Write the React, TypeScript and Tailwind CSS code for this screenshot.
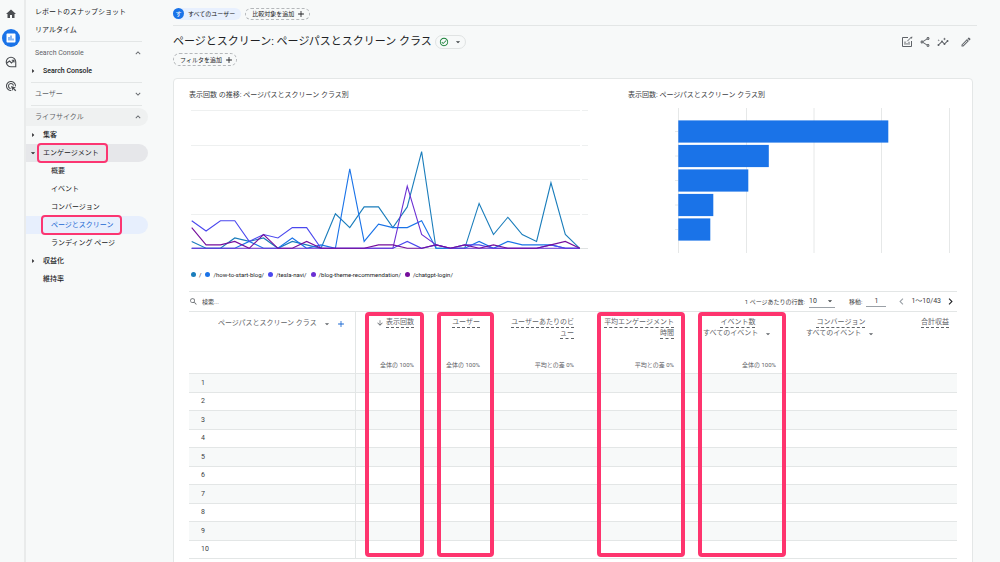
import type { ReactNode } from "react";
import {
  MdAdd,
  MdAdsClick,
  MdArrowDownward,
  MdArrowDropDown,
  MdArrowRight,
  MdChevronLeft,
  MdChevronRight,
  MdExpandLess,
  MdExpandMore,
  MdHome,
  MdInsertChart,
  MdOutlineCheckCircle,
  MdOutlineEdit,
  MdOutlineInsights,
  MdOutlineShare,
  MdSearch,
} from "react-icons/md";

const series = [
  {
    name: "/",
    color: "#1a7dbb",
    values: [2, 0, 0, 3, 2, 3, 0, 2, 1, 0, 10, 6, 12, 12, 6, 12, 28, 0, 0, 0, 13, 4, 9, 4, 2, 19, 4, 0],
  },
  {
    name: "/how-to-start-blog/",
    color: "#1a73e8",
    values: [0, 0, 0, 0, 2, 0, 0, 3, 0, 1, 0, 23, 2, 7, 6, 6, 8, 0, 0, 0, 2, 0, 2, 1, 1, 1, 0, 0],
  },
  {
    name: "/tesla-navi/",
    color: "#4b48ee",
    values: [8, 5, 8, 8, 2, 4, 3, 6, 6, 0, 0, 0, 0, 0, 0, 2, 0, 1, 0, 1, 1, 0, 0, 0, 0, 1, 0, 0],
  },
  {
    name: "/blog-theme-recommendation/",
    color: "#6b2fd3",
    values: [0, 0, 0, 0, 0, 0, 0, 0, 0, 0, 0, 0, 0, 0, 0, 18, 4, 1, 0, 0, 0, 0, 0, 0, 0, 0, 0, 0],
  },
  {
    name: "/chatgpt-login/",
    color: "#750e9c",
    values: [6, 1, 1, 2, 0, 4, 0, 0, 2, 0, 0, 0, 0, 1, 1, 0, 0, 1, 0, 1, 0, 1, 0, 0, 0, 1, 2, 0],
  },
];

const bars = [210, 90.5, 70, 35, 32];

const rows = [1, 2, 3, 4, 5, 6, 7, 8, 9, 10];

export default function App() {
  return (
    <div className="flex h-screen overflow-hidden bg-[#f7f9f9] font-['Roboto','Noto_Sans_CJK_JP',sans-serif] text-[7px] leading-[11px] text-[#3c4043]">
      <Rail />
      <Sidebar />
      <main className="min-w-0 flex-1 px-[23px]">
        <Header />
        <div className="mr-1 mt-3 rounded-t-[4px] border border-[#e4e7e7] bg-white px-[15px] pb-20 pt-[11px]">
          <div className="grid grid-cols-[400fr_329fr] gap-[39px]">
            <section>
              <h2 className="h-[10px] leading-[10px]">表示回数 の推移: ページパスとスクリーン クラス別</h2>
              <LineChart />
            </section>
            <section>
              <h2 className="h-[10px] leading-[10px]">表示回数: ページパスとスクリーン クラス別</h2>
              <BarChart />
            </section>
          </div>
          <ul className="mb-3 mt-[14px] flex h-[10px] items-center gap-1 pl-[2px] text-[6px] text-[#202124]">
            {series.map((s) => (
              <li key={s.name} className="flex items-center gap-[3px]">
                <span className="size-[5px] rounded-full" style={{ backgroundColor: s.color }} />
                {s.name}
              </li>
            ))}
          </ul>
          <TableToolbar />
          <ReportTable />
        </div>
      </main>
    </div>
  );
}

function Rail() {
  return (
    <nav className="flex w-[26px] shrink-0 flex-col items-center gap-[6px] border-r-2 border-[#e9ebeb] pr-[2px] pt-[5px] text-[#4a4d51]">
      <RailLink label="ホーム">
        <MdHome size={12} />
      </RailLink>
      <a href="#" aria-label="レポート" className="flex size-[18px] items-center justify-center rounded-full bg-[#1a73e8] text-white">
        <MdInsertChart size={12} />
      </a>
      <RailLink label="探索">
        <svg viewBox="0 0 24 24" className="size-3" fill="none" stroke="currentColor" strokeWidth="2.2">
          <path d="M12 2.5a9.5 9.5 0 1 0 0 19h9.5V12A9.5 9.5 0 0 0 12 2.5Z" />
          <path d="M3 14.5 9 10l4 4 5-5.500M13.500 8.500H18V13" />
        </svg>
      </RailLink>
      <RailLink label="広告">
        <MdAdsClick size={12} />
      </RailLink>
    </nav>
  );
}

function RailLink({ label, children }: { label: string; children: ReactNode }) {
  return (
    <a href="#" aria-label={label} className="flex size-[18px] items-center justify-center">
      {children}
    </a>
  );
}

function Sidebar() {
  return (
    <nav className="w-[124px] shrink-0 pr-[2px] pt-[3px] text-[#202124]">
      <a href="#" className="flex h-[18px] items-center pl-[9px]">レポートのスナップショット</a>
      <a href="#" className="flex h-[18px] items-center pl-[9px]">リアルタイム</a>
      <Divider />
      <Group label="Search Console" open />
      <Item label="Search Console" arrow />
      <Divider />
      <Group label="ユーザー" />
      <Divider />
      <div className="rounded-r-full bg-[#eff1f1]">
        <Group label="ライフサイクル" open />
      </div>
      <Item label="集客" arrow />
      <a href="#" className="relative flex h-[18px] items-center rounded-r-full bg-[#e6e7ea] pl-[2px]">
        <MdArrowDropDown size={10} />
        <span className="ml-[5px]">エンゲージメント</span>
        <span className="pointer-events-none absolute -top-px left-[11px] h-[20px] w-[71px] rounded-[4px] border-2 border-[#fb3672]" />
      </a>
      <SubItem label="概要" />
      <SubItem label="イベント" />
      <SubItem label="コンバージョン" />
      <a href="#" className="relative flex h-[18px] items-center rounded-r-full bg-[#e7effd] pl-[25px] text-[#1967d2]">
        ページとスクリーン
        <span className="pointer-events-none absolute -top-px left-[15px] h-[20px] w-[81px] rounded-[4px] border-2 border-[#fb3672]" />
      </a>
      <SubItem label="ランディング ページ" />
      <Item label="収益化" arrow />
      <Item label="維持率" />
    </nav>
  );
}

function Divider() {
  return <hr className="my-[2px] ml-[5px] mr-[6px] border-t border-[#e3e6e6]" />;
}

function Group({ label, open }: { label: string; open?: boolean }) {
  return (
    <button type="button" className="flex h-[18px] w-full items-center justify-between pl-[9px] pr-[5px] text-[#5f6368]">
      {label}
      {open ? <MdExpandLess size={10} /> : <MdExpandMore size={10} />}
    </button>
  );
}

function Item({ label, arrow }: { label: string; arrow?: boolean }) {
  return (
    <a href="#" className="flex h-[18px] items-center pl-[2px] font-medium">
      <span className="w-[15px]">{arrow && <MdArrowRight size={10} />}</span>
      {label}
    </a>
  );
}

function SubItem({ label }: { label: string }) {
  return (
    <a href="#" className="flex h-[18px] items-center pl-[25px]">
      {label}
    </a>
  );
}

function Header() {
  return (
    <header>
      <div className="flex h-[26px] items-center gap-1 border-b border-[#e3e6e6] pt-[2px] text-[6px] text-[#202124]">
        <button type="button" className="flex h-3 items-center gap-1 rounded-full bg-[#e8f0fe] pr-[6px]">
          <span className="flex size-[11px] items-center justify-center rounded-full bg-[#1a73e8] text-white">す</span>
          すべてのユーザー
        </button>
        <button type="button" className="flex h-3 items-center gap-[2px] rounded-full border border-dashed border-[#b4b7ba] pl-[6px] pr-[3px]">
          比較対象を追加
          <MdAdd size={10} />
        </button>
      </div>
      <div className="mt-[9px] flex h-[14px] items-center justify-between">
        <div className="flex items-center gap-[3px]">
          <h1 className="text-[11px] leading-[14px] text-[#202124]">ページとスクリーン: ページパスとスクリーン クラス</h1>
          <button type="button" aria-label="レポートのステータス" className="flex h-[14px] items-center gap-1 rounded-full border border-[#e0e3e3] pl-[3px] pr-[2px]">
            <MdOutlineCheckCircle size={10} className="text-[#188038]" />
            <MdArrowDropDown size={10} />
          </button>
        </div>
        <div className="flex items-center gap-[6px] pr-[5px] text-[#5f6368]">
          <button type="button" aria-label="比較対象を編集">
            <svg viewBox="0 0 24 24" className="size-3" fill="none" stroke="currentColor" strokeWidth="2">
              <path d="M14 3H3v18h18V10M8 11v6.500M12 14v3.500M16 11.500v6M12.500 10.500 21.500 1.500" />
              <path d="m20 2.500 2 2" strokeWidth="3" />
            </svg>
          </button>
          <button type="button" aria-label="このレポートの共有">
            <MdOutlineShare size={12} />
          </button>
          <button type="button" aria-label="インサイト">
            <MdOutlineInsights size={12} />
          </button>
          <button type="button" aria-label="レポートをカスタマイズ" className="ml-[5px]">
            <MdOutlineEdit size={12} />
          </button>
        </div>
      </div>
      <button type="button" className="mt-1 flex h-[13px] items-center gap-[2px] rounded-full border border-dashed border-[#b4b7ba] pl-[6px] pr-[2px] text-[6px] text-[#202124]">
        フィルタを追加
        <MdAdd size={10} />
      </button>
    </header>
  );
}

function LineChart() {
  return (
    <svg viewBox="0 0 400 150" className="mt-[5px] w-full" role="img" aria-label="表示回数の推移">
      {[5.5, 40.5, 74.5, 109.5].map((y) => (
        <path key={y} d={`M2 ${y}H391M393 ${y}H399`} stroke="#eef0f0" />
      ))}
      <path d="M2 143.5H399" stroke="#dfe2e2" />
      {series.map((s) => (
        <polyline
          key={s.name}
          points={s.values.map((v, i) => `${2.7 + i * 14.37},${143.3 - v * 3.45}`).join(" ")}
          fill="none"
          stroke={s.color}
          strokeWidth="1.1"
        />
      ))}
    </svg>
  );
}

function BarChart() {
  return (
    <svg viewBox="0 0 329 150" className="mt-[5px] w-full" role="img" aria-label="クラス別の表示回数">
      {[50.5, 118.5, 186, 253.5, 321.5].map((x) => (
        <path key={x} d={`M${x} 3V148`} stroke="#e6e8e8" />
      ))}
      {bars.map((width, i) => (
        <g key={i}>
          <path d={`M47 ${26.5 + i * 24.5}h3`} stroke="#e6e8e8" />
          <rect x="50.3" y={15.4 + i * 24.5} width={width} height="22.2" fill="#1a73e8" />
        </g>
      ))}
    </svg>
  );
}

function TableToolbar() {
  return (
    <div className="flex h-[20px] items-center border-t border-[#e3e6e6] text-[6px] text-[#3c4043]">
      <label className="flex flex-1 items-center gap-1">
        <MdSearch size={9} className="text-[#5f6368]" />
        <input type="text" aria-label="検索" placeholder="検索..." className="w-24 bg-transparent outline-none placeholder:text-[#3c4043]" />
      </label>
      <label className="flex items-center gap-1">
        <span>1 ページあたりの行数:</span>
        <span className="relative flex border-b border-[#9aa0a6]">
          <select className="h-[11px] w-[26px] appearance-none bg-transparent text-[7px]">
            <option>10</option>
            <option>25</option>
          </select>
          <MdArrowDropDown size={10} className="pointer-events-none absolute right-0 top-0" />
        </span>
      </label>
      <label className="ml-[14px] flex items-center gap-1">
        <span>移動:</span>
        <input type="text" defaultValue="1" className="h-[10px] w-[20px] border-b border-[#9aa0a6] bg-transparent text-center text-[7px] outline-none" />
      </label>
      <button type="button" aria-label="前のページ" className="ml-[9px] text-[#9aa0a6]">
        <MdChevronLeft size={13} />
      </button>
      <span className="ml-[3px] text-[7px]">1〜10/43</span>
      <button type="button" aria-label="次のページ" className="ml-[3px] text-[#202124]">
        <MdChevronRight size={13} />
      </button>
    </div>
  );
}

function ReportTable() {
  return (
    <table className="w-full table-fixed border-separate border-spacing-0 text-[#5f6368]">
      <colgroup>
        <col />
        <col className="w-[66px]" />
        <col className="w-[66px]" />
        <col className="w-[94px]" />
        <col className="w-[100px]" />
        <col className="w-[102px]" />
        <col className="w-[103px]" />
        <col className="w-[70px]" />
      </colgroup>
      <thead>
        <tr>
          <th scope="col" className="border-b border-r border-t border-[#e3e6e6] p-0 align-top font-normal">
            <div className="flex items-center justify-end gap-1 pr-[9px] pt-[6px]">
              <Dropdown label="ディメンション" option="ページパスとスクリーン クラス" />
              <button type="button" aria-label="ディメンションを追加" className="text-[#1967d2]">
                <MdAdd size={10} />
              </button>
            </div>
          </th>
          <Metric lines={["表示回数"]} total="全体の 100%" sorted>
            <span className="pointer-events-none absolute left-[9px] right-[-2px] top-0 z-10 h-[245px] rounded-[4px] border-4 border-[#fe346e]" />
          </Metric>
          <Metric lines={["ユーザー"]} total="全体の 100%">
            <span className="pointer-events-none absolute left-[15px] right-[-6px] top-0 z-10 h-[245px] rounded-[4px] border-4 border-[#fe346e]" />
          </Metric>
          <Metric lines={["ユーザーあたりのビ", "ュー"]} total="平均との差 0%" />
          <Metric lines={["平均エンゲージメント", "時間"]} total="平均との差 0%">
            <span className="pointer-events-none absolute left-[15px] right-[-3px] top-0 z-10 h-[245px] rounded-[4px] border-4 border-[#fe346e]" />
          </Metric>
          <Metric lines={["イベント数"]} total="全体の 100%" filter>
            <span className="pointer-events-none absolute left-[16px] right-[-2px] top-0 z-10 h-[245px] rounded-[4px] border-4 border-[#fe346e]" />
          </Metric>
          <Metric lines={["コンバージョン"]} filter />
          <Metric lines={["合計収益"]} />
        </tr>
      </thead>
      <tbody>
        {rows.map((row) => (
          <tr key={row} className="odd:h-[19px] odd:bg-[#f7f9f9] even:h-[18px]">
            <td className="border-b border-r border-[#e3e6e6] py-0 pl-3 pr-0 text-[#3c4043]">{row}</td>
            <td colSpan={7} className="border-b border-[#e3e6e6] p-0" />
          </tr>
        ))}
      </tbody>
    </table>
  );
}

type MetricProps = {
  lines: string[];
  total?: string;
  sorted?: boolean;
  filter?: boolean;
  children?: ReactNode;
};

function Metric({ lines, total, sorted, filter, children }: MetricProps) {
  return (
    <th scope="col" className="relative border-b border-t border-[#e3e6e6] p-0 font-normal">
      <div className="flex h-[61px] flex-col items-end justify-between whitespace-nowrap pb-[3px] pr-2 pt-[5px]">
        <div className={filter ? "flex flex-col items-center pr-[3px]" : "flex flex-col items-end"}>
          {lines.map((line) => (
            <span key={line} className="flex h-[11px] items-center gap-[2px]">
              {sorted && <MdArrowDownward size={8} />}
              <span className="underline decoration-dashed decoration-1 underline-offset-[3px]">{line}</span>
            </span>
          ))}
          {filter && <Dropdown label={lines[0]} option="すべてのイベント" />}
        </div>
        <span className="text-[6px]">{total}</span>
      </div>
      {children}
    </th>
  );
}

function Dropdown({ label, option }: { label: string; option: string }) {
  return (
    <span className="relative flex items-center">
      <select aria-label={label} className="h-[11px] appearance-none bg-transparent pr-[14px]">
        <option>{option}</option>
      </select>
      <MdArrowDropDown size={10} className="pointer-events-none absolute right-0" />
    </span>
  );
}
